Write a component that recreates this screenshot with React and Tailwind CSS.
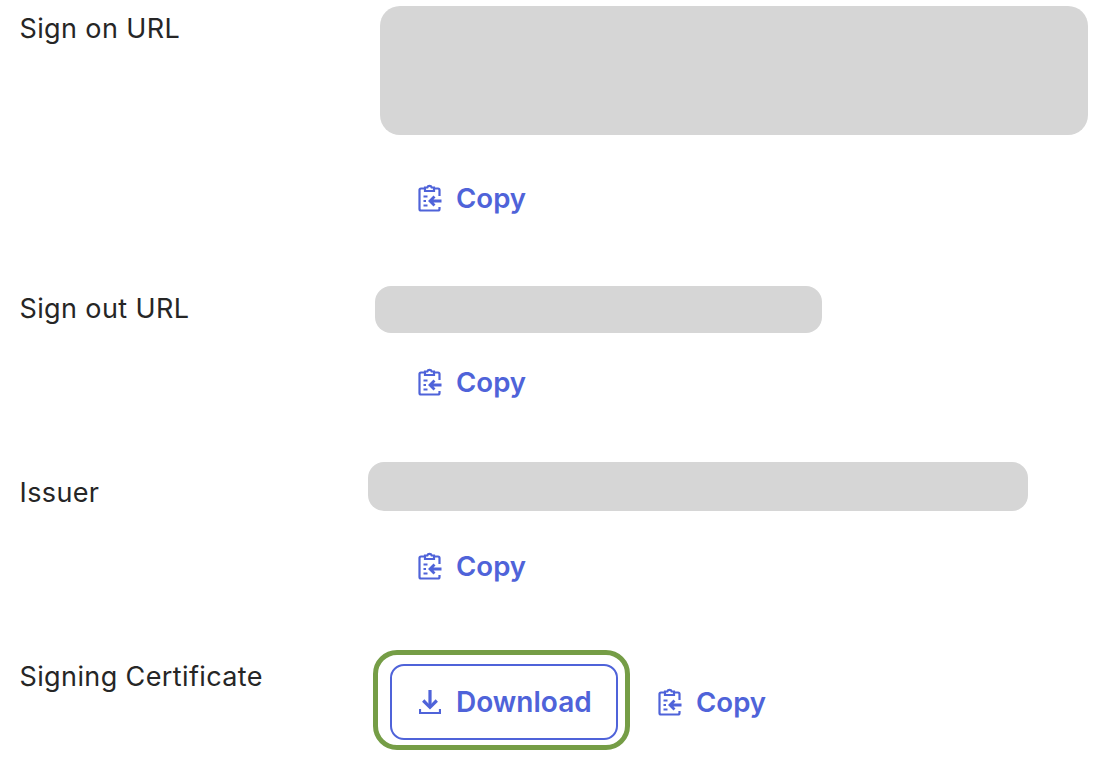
const INK = "text-[#4f63d9]";

function ClipIcon() {
  return (
    <svg width="24" height="30" viewBox="0 0 24 30" fill="none" stroke="#4f63d9" strokeWidth="2.2" className="shrink-0">
      <path d="M7 5.500H3a1.500 1.500 0 0 0-1.500 1.500v19A1.500 1.500 0 0 0 3 27.500h17a1.500 1.500 0 0 0 1.500-1.500V24M21.500 13V7A1.500 1.500 0 0 0 20 5.500h-4" />
      <path d="M7 8V4.500h2.300a2.300 2.300 0 0 1 4.400 0H16V8Z" />
      <path d="M5.500 13.500h4M5.500 18h2.500M5.500 22.500h4" />
      <path d="M23.500 18H12M16.500 13.500 12 18l4.500 4.500" strokeWidth="2.800" />
    </svg>
  );
}

function DownloadIcon() {
  return (
    <svg width="22" height="24" viewBox="0 0 22 24" fill="none" stroke="#4f63d9" className="shrink-0">
      <path d="M11 0v17" strokeWidth="3.200" />
      <path d="M4.200 10.500 11 17.300l6.800-6.800" strokeWidth="3.200" />
      <path d="M1 19v4h20v-4" strokeWidth="2.200" />
    </svg>
  );
}

function Copy({ className = "" }) {
  return (
    <div className={`flex items-center gap-[14px] ${className}`}>
      <ClipIcon />
      <span className={`text-[27.6px] leading-[34px] font-semibold ${INK}`}>Copy</span>
    </div>
  );
}

function Row({ label, labelTop, className = "", children }) {
  return (
    <div className={`flex ${className}`}>
      <div className="w-[368px] shrink-0 pl-[19.500px] text-[27px] tracking-[0.38px] leading-[34px] text-[#262626]" style={{ paddingTop: labelTop }}>
        {label}
      </div>
      <div className="flex-1">{children}</div>
    </div>
  );
}

export default function App() {
  return (
    <div className="w-[1098px] h-[766px] overflow-hidden bg-white font-['Inter',sans-serif] pt-[6px]">
      <Row label="Sign on URL" labelTop={6}>
        <div className="ml-3 w-[708px] h-[129px] rounded-[20px] bg-[#d6d6d6]" />
        <Copy className="ml-[50px] mt-[46px]" />
      </Row>
      <Row label="Sign out URL" labelTop={6} className="mt-[71px]">
        <div className="ml-[7px] w-[447px] h-[47px] rounded-[16px] bg-[#d6d6d6]" />
        <Copy className="ml-[50px] mt-[32px]" />
      </Row>
      <Row label="Issuer" labelTop={14} className="mt-[63px]">
        <div className="w-[660px] h-[49px] rounded-[16px] bg-[#d6d6d6]" />
        <Copy className="ml-[50px] mt-[38px]" />
      </Row>
      <Row label="Signing Certificate" labelTop={10} className="mt-[67px]">
        <div className="flex items-center">
          <div className="ml-[5px] w-[257px] h-[100px] rounded-[24px] border-[5px] border-[#759d46] pl-3 pt-[9px]">
            <div className="w-[228px] h-[76px] rounded-[14px] border-2 border-[#4f63d9] flex items-center pl-[27px] gap-[15px]">
              <DownloadIcon />
              <span className={`text-[28px] leading-[34px] font-semibold ${INK}`}>Download</span>
            </div>
          </div>
          <Copy className="ml-[28px] mt-1" />
        </div>
      </Row>
    </div>
  );
}
